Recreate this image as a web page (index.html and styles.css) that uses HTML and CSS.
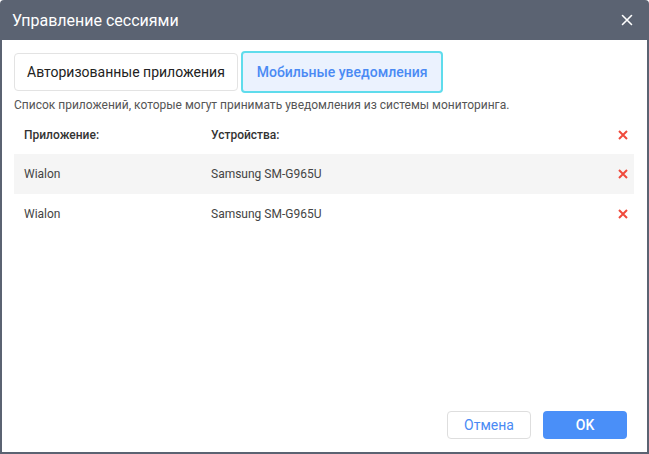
FILE: index.html
```html
<!DOCTYPE html>
<html lang="ru">
<head>
<meta charset="utf-8">
<link rel="stylesheet" href="styles.css">
</head>
<body>
<div class="dialog">
  <div class="titlebar">
    <span class="title">Управление сессиями</span>
    <svg class="close" width="12" height="12" viewBox="0 0 12 12"><path d="M1.5 1.5L10.5 10.5M10.5 1.5L1.5 10.5" stroke="#fff" stroke-width="1.6" stroke-linecap="round"/></svg>
  </div>
  <div class="content">
    <div class="tabs">
      <div class="tab">Авторизованные приложения</div>
      <div class="tab active">Мобильные уведомления</div>
    </div>
    <p class="desc">Список приложений, которые могут принимать уведомления из системы мониторинга.</p>
    <div class="table">
      <div class="row head">
        <span class="c1">Приложение:</span>
        <span class="c2">Устройства:</span>
        <svg class="del" width="10" height="10" viewBox="0 0 10 10"><path d="M1 1L9 9M9 1L1 9" stroke="#f04a3c" stroke-width="2"/></svg>
      </div>
      <div class="row odd">
        <span class="c1">Wialon</span>
        <span class="c2">Samsung SM-G965U</span>
        <svg class="del" width="10" height="10" viewBox="0 0 10 10"><path d="M1 1L9 9M9 1L1 9" stroke="#f04a3c" stroke-width="2"/></svg>
      </div>
      <div class="row">
        <span class="c1">Wialon</span>
        <span class="c2">Samsung SM-G965U</span>
        <svg class="del" width="10" height="10" viewBox="0 0 10 10"><path d="M1 1L9 9M9 1L1 9" stroke="#f04a3c" stroke-width="2"/></svg>
      </div>
    </div>
    <div class="footer">
      <button class="btn cancel">Отмена</button>
      <button class="btn ok">OK</button>
    </div>
  </div>
</div>
</body>
</html>
```

FILE: styles.css
```css
* { box-sizing: border-box; }
html, body { margin: 0; padding: 0; background: #fff; }
body { font-family: Roboto, "Noto Sans", sans-serif; }
.dialog {
  width: 649px;
  height: 454px;
  display: flex;
  flex-direction: column;
  background: #5b6372;
  border-radius: 4px 4px 0 0;
  padding: 0 2px 2px 2px;
}
.titlebar {
  height: 40px;
  flex: none;
  display: flex;
  align-items: center;
  justify-content: space-between;
  padding: 0 14px 0 10px;
  color: #fff;
}
.title { font-size: 16px; font-weight: 400; letter-spacing: 0; }
.close { display: block; }
.content {
  flex: 1;
  background: #fff;
  display: flex;
  flex-direction: column;
  padding: 11px 13px 13px 12px;
}
.tabs { display: flex; align-items: center; gap: 3px; }
.tab {
  height: 38px;
  padding: 0 12px;
  border: 1px solid #e3e3e3;
  border-radius: 4px;
  display: flex;
  align-items: center;
  font-size: 14px;
  color: #222;
}
.tab.active {
  height: 42px;
  border: 2px solid #5fdcec;
  background: #ebf2fe;
  color: #4a8af4;
  font-weight: 500;
  padding: 0 14px;
}
.desc {
  margin: 5px 0 0 0;
  font-size: 12px;
  color: #555;
  line-height: 14px;
}
.table { margin-top: 4px; }
.row {
  height: 40px;
  display: flex;
  align-items: center;
  padding: 0 6px 0 10px;
  font-size: 12px;
  color: #444;
}
.row.head { height: 38px; font-weight: 500; color: #333; }
.row.odd { background: #f5f5f5; }
.c1 { width: 187px; }
.c2 { flex: 1; }
.del { display: block; }
.footer {
  margin-top: auto;
  display: flex;
  justify-content: flex-end;
  gap: 12px;
  padding-right: 7px;
}
.btn {
  width: 84px;
  height: 28px;
  border-radius: 4px;
  font-family: Roboto, sans-serif;
  font-size: 14px;
  cursor: pointer;
}
.cancel { background: #fff; border: 1px solid #dedede; color: #4a8af4; }
.ok { background: #4a8ff8; border: none; color: #fff; font-weight: 500; }
```
